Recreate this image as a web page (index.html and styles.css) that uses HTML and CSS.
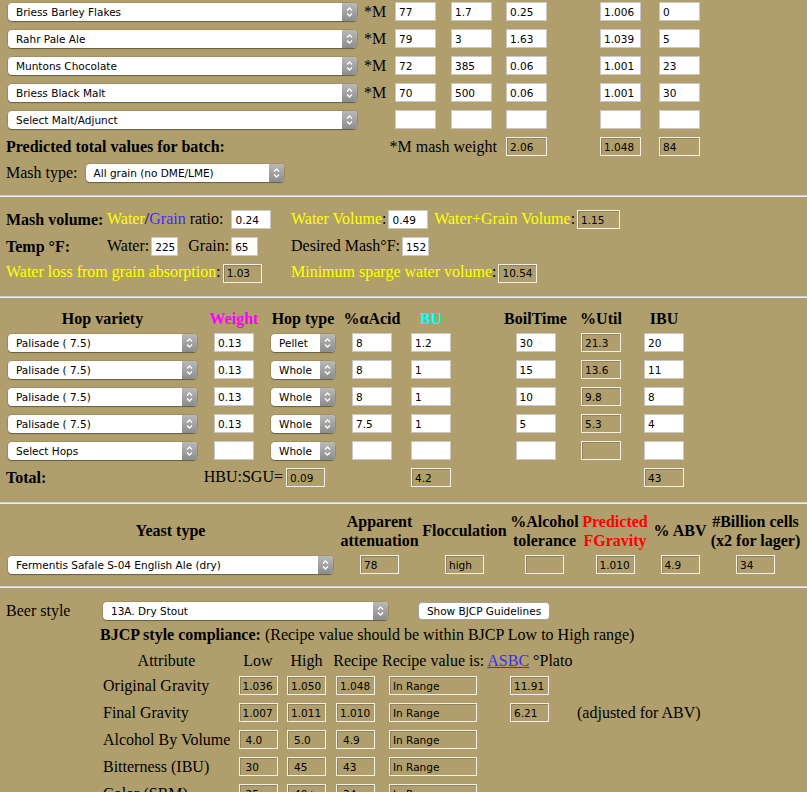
FILE: index.html
```html
<!DOCTYPE html>
<html>
<head>
<meta charset="utf-8">
<title>Recipe</title>
<link rel="stylesheet" href="styles.css">
</head>
<body>
<div class="grain">
  <div class="sel w349"><span class="sel-text">Briess Barley Flakes</span><span class="sel-btn"><svg width="15" height="18" viewBox="0 0 15 18"><path d="M5 7.5L7.5 5 10 7.5M5 10.5L7.5 13 10 10.5" fill="none" stroke="#fff" stroke-width="1.3"/></svg></span></div>
  <span class="m">*M</span>
  <input value="77"><input value="1.7"><input value="0.25"><input value="1.006"><input value="0">

  <div class="sel w349"><span class="sel-text">Rahr Pale Ale</span><span class="sel-btn"><svg width="15" height="18" viewBox="0 0 15 18"><path d="M5 7.5L7.5 5 10 7.5M5 10.5L7.5 13 10 10.5" fill="none" stroke="#fff" stroke-width="1.3"/></svg></span></div>
  <span class="m">*M</span>
  <input value="79"><input value="3"><input value="1.63"><input value="1.039"><input value="5">

  <div class="sel w349"><span class="sel-text">Muntons Chocolate</span><span class="sel-btn"><svg width="15" height="18" viewBox="0 0 15 18"><path d="M5 7.5L7.5 5 10 7.5M5 10.5L7.5 13 10 10.5" fill="none" stroke="#fff" stroke-width="1.3"/></svg></span></div>
  <span class="m">*M</span>
  <input value="72"><input value="385"><input value="0.06"><input value="1.001"><input value="23">

  <div class="sel w349"><span class="sel-text">Briess Black Malt</span><span class="sel-btn"><svg width="15" height="18" viewBox="0 0 15 18"><path d="M5 7.5L7.5 5 10 7.5M5 10.5L7.5 13 10 10.5" fill="none" stroke="#fff" stroke-width="1.3"/></svg></span></div>
  <span class="m">*M</span>
  <input value="70"><input value="500"><input value="0.06"><input value="1.001"><input value="30">

  <div class="sel w349"><span class="sel-text">Select Malt/Adjunct</span><span class="sel-btn"><svg width="15" height="18" viewBox="0 0 15 18"><path d="M5 7.5L7.5 5 10 7.5M5 10.5L7.5 13 10 10.5" fill="none" stroke="#fff" stroke-width="1.3"/></svg></span></div>
  <span class="m"></span>
  <input value=""><input value=""><input value=""><input value=""><input value="">

  <b class="pred t">Predicted total values for batch:</b>
  <span class="mw t">*M mash weight</span>
  <input class="ro" value="2.06" readonly><input class="ro" value="1.048" readonly><input class="ro" value="84" readonly>
</div>

<div class="mashtype">
  <span>Mash type:</span>
  <div class="sel w198"><span class="sel-text">All grain (no DME/LME)</span><span class="sel-btn"><svg width="15" height="18" viewBox="0 0 15 18"><path d="M5 7.5L7.5 5 10 7.5M5 10.5L7.5 13 10 10.5" fill="none" stroke="#fff" stroke-width="1.3"/></svg></span></div>
</div>

<hr class="rule r1">

<div class="mash">
  <b class="t">Mash volume:</b>
  <span><span class="y">Water</span>/<span class="bl">Grain</span> ratio: <input class="w40 gap" value="0.24"></span>
  <span><span class="y">Water Volume</span>:<input class="w40" value="0.49"> <span class="y">Water+Grain Volume</span>:<input class="ro w43" value="1.15" readonly></span>

  <b class="t">Temp °F:</b>
  <span>Water:<input class="w27" value="225"> &nbsp;Grain:<input class="w27" value="65"></span>
  <span>Desired Mash°F:<input class="w27" value="152"></span>

  <span class="span2"><span class="y">Water loss from grain absorption</span>:<input class="ro w39" value="1.03" readonly></span>
  <span><span class="y">Minimum sparge water volume</span>:<input class="ro w39" value="10.54" readonly></span>
</div>

<hr class="rule r2">

<div class="hops">
  <b class="hd">Hop variety</b>
  <b class="hd mag">Weight</b>
  <b class="hd">Hop type</b>
  <b class="hd">%αAcid</b>
  <b class="hd cy">BU</b>
  <span></span>
  <b class="hd">BoilTime</b>
  <b class="hd">%Util</b>
  <b class="hd">IBU</b>

  <div class="sel w189"><span class="sel-text">Palisade ( 7.5)</span><span class="sel-btn"><svg width="15" height="18" viewBox="0 0 15 18"><path d="M5 7.5L7.5 5 10 7.5M5 10.5L7.5 13 10 10.5" fill="none" stroke="#fff" stroke-width="1.3"/></svg></span></div>
  <input class="w40" value="0.13">
  <div class="sel w64"><span class="sel-text">Pellet</span><span class="sel-btn"><svg width="15" height="18" viewBox="0 0 15 18"><path d="M5 7.5L7.5 5 10 7.5M5 10.5L7.5 13 10 10.5" fill="none" stroke="#fff" stroke-width="1.3"/></svg></span></div>
  <input class="w40" value="8"><input class="w40" value="1.2"><span></span><input class="w40" value="30"><input class="ro w40" value="21.3" readonly><input class="w40" value="20">

  <div class="sel w189"><span class="sel-text">Palisade ( 7.5)</span><span class="sel-btn"><svg width="15" height="18" viewBox="0 0 15 18"><path d="M5 7.5L7.5 5 10 7.5M5 10.5L7.5 13 10 10.5" fill="none" stroke="#fff" stroke-width="1.3"/></svg></span></div>
  <input class="w40" value="0.13">
  <div class="sel w64"><span class="sel-text">Whole</span><span class="sel-btn"><svg width="15" height="18" viewBox="0 0 15 18"><path d="M5 7.5L7.5 5 10 7.5M5 10.5L7.5 13 10 10.5" fill="none" stroke="#fff" stroke-width="1.3"/></svg></span></div>
  <input class="w40" value="8"><input class="w40" value="1"><span></span><input class="w40" value="15"><input class="ro w40" value="13.6" readonly><input class="w40" value="11">

  <div class="sel w189"><span class="sel-text">Palisade ( 7.5)</span><span class="sel-btn"><svg width="15" height="18" viewBox="0 0 15 18"><path d="M5 7.5L7.5 5 10 7.5M5 10.5L7.5 13 10 10.5" fill="none" stroke="#fff" stroke-width="1.3"/></svg></span></div>
  <input class="w40" value="0.13">
  <div class="sel w64"><span class="sel-text">Whole</span><span class="sel-btn"><svg width="15" height="18" viewBox="0 0 15 18"><path d="M5 7.5L7.5 5 10 7.5M5 10.5L7.5 13 10 10.5" fill="none" stroke="#fff" stroke-width="1.3"/></svg></span></div>
  <input class="w40" value="8"><input class="w40" value="1"><span></span><input class="w40" value="10"><input class="ro w40" value="9.8" readonly><input class="w40" value="8">

  <div class="sel w189"><span class="sel-text">Palisade ( 7.5)</span><span class="sel-btn"><svg width="15" height="18" viewBox="0 0 15 18"><path d="M5 7.5L7.5 5 10 7.5M5 10.5L7.5 13 10 10.5" fill="none" stroke="#fff" stroke-width="1.3"/></svg></span></div>
  <input class="w40" value="0.13">
  <div class="sel w64"><span class="sel-text">Whole</span><span class="sel-btn"><svg width="15" height="18" viewBox="0 0 15 18"><path d="M5 7.5L7.5 5 10 7.5M5 10.5L7.5 13 10 10.5" fill="none" stroke="#fff" stroke-width="1.3"/></svg></span></div>
  <input class="w40" value="7.5"><input class="w40" value="1"><span></span><input class="w40" value="5"><input class="ro w40" value="5.3" readonly><input class="w40" value="4">

  <div class="sel w189"><span class="sel-text">Select Hops</span><span class="sel-btn"><svg width="15" height="18" viewBox="0 0 15 18"><path d="M5 7.5L7.5 5 10 7.5M5 10.5L7.5 13 10 10.5" fill="none" stroke="#fff" stroke-width="1.3"/></svg></span></div>
  <input class="w40" value="">
  <div class="sel w64"><span class="sel-text">Whole</span><span class="sel-btn"><svg width="15" height="18" viewBox="0 0 15 18"><path d="M5 7.5L7.5 5 10 7.5M5 10.5L7.5 13 10 10.5" fill="none" stroke="#fff" stroke-width="1.3"/></svg></span></div>
  <input class="w40" value=""><input class="w40" value=""><span></span><input class="w40" value=""><input class="ro w40" value="" readonly><input class="w40" value="">

  <b class="left t">Total:</b>
  <span class="hbu">HBU:SGU=<input class="ro w39" value="0.09" readonly></span>
  <input class="ro w40 c5" value="4.2" readonly>
  <input class="ro w40 c9" value="43" readonly>
</div>

<hr class="rule r3">

<div class="yeast">
  <b class="hd yt">Yeast type</b>
  <b class="hd">Apparent<br>attenuation</b>
  <b class="hd">Flocculation</b>
  <b class="hd">%Alcohol<br>tolerance</b>
  <b class="hd red">Predicted<br>FGravity</b>
  <b class="hd">% ABV</b>
  <b class="hd">#Billion cells<br>(x2 for lager)</b>

  <div class="sel w325 ysel"><span class="sel-text">Fermentis Safale S-04 English Ale (dry)</span><span class="sel-btn"><svg width="15" height="18" viewBox="0 0 15 18"><path d="M5 7.5L7.5 5 10 7.5M5 10.5L7.5 13 10 10.5" fill="none" stroke="#fff" stroke-width="1.3"/></svg></span></div>
  <input class="ro w39" value="78" readonly>
  <input class="ro w39" value="high" readonly>
  <input class="ro w39" value="" readonly>
  <input class="ro w39" value="1.010" readonly>
  <input class="ro w39" value="4.9" readonly>
  <input class="ro w39" value="34" readonly>
</div>

<hr class="rule r4">

<div class="style">
  <span class="t">Beer style</span>
  <div class="sel w285"><span class="sel-text">13A. Dry Stout</span><span class="sel-btn"><svg width="15" height="18" viewBox="0 0 15 18"><path d="M5 7.5L7.5 5 10 7.5M5 10.5L7.5 13 10 10.5" fill="none" stroke="#fff" stroke-width="1.3"/></svg></span></div>
  <button class="btn">Show BJCP Guidelines</button>
</div>

<div class="compl"><b>BJCP style compliance:</b>&nbsp;(Recipe value should be within BJCP Low to High range)</div>

<div class="attr">
  <span class="ah">Attribute</span>
  <span class="ah">Low</span>
  <span class="ah">High</span>
  <span class="ah">Recipe</span>
  <span class="rvh ah">Recipe value is: <a href="#" class="link">ASBC</a> °Plato</span>

  <span class="lbl">Original Gravity</span>
  <input class="ro w39" value="1.036" readonly><input class="ro w39" value="1.050" readonly><input class="ro w39" value="1.048" readonly>
  <input class="ro w88" value="In Range" readonly><input class="ro w39" value="11.91" readonly><span></span>

  <span class="lbl">Final Gravity</span>
  <input class="ro w39" value="1.007" readonly><input class="ro w39" value="1.011" readonly><input class="ro w39" value="1.010" readonly>
  <input class="ro w88" value="In Range" readonly><input class="ro w39" value="6.21" readonly><span class="lbl">(adjusted for ABV)</span>

  <span class="lbl">Alcohol By Volume</span>
  <input class="ro w39 sp" value="4.0" readonly><input class="ro w39 sp" value="5.0" readonly><input class="ro w39 sp" value="4.9" readonly>
  <input class="ro w88" value="In Range" readonly><span></span><span></span>

  <span class="lbl">Bitterness (IBU)</span>
  <input class="ro w39 sp" value="30" readonly><input class="ro w39 sp" value="45" readonly><input class="ro w39 sp" value="43" readonly>
  <input class="ro w88" value="In Range" readonly><span></span><span></span>

  <span class="lbl">Color (SRM)</span>
  <input class="ro w39 sp" value="25" readonly><input class="ro w39 sp" value="40+" readonly><input class="ro w39 sp" value="34" readonly>
  <input class="ro w88" value="In Range" readonly><span></span><span></span>
</div>
</body>
</html>
```

FILE: styles.css
```css
* { box-sizing: border-box; }
html { overflow: hidden; }
body {
  margin: 0;
  padding: 0 6px;
  background: #b09f6c;
  color: #000;
  font-family: "Liberation Serif", "Times New Roman", serif;
  font-size: 16px;
  line-height: 1.15;
}

/* controls */
input, .sel, .btn {
  font-family: "DejaVu Sans", "Liberation Sans", sans-serif;
  font-size: 10.5px;
  color: #000;
}
input {
  margin: 0;
  width: 41px;
  height: 19px;
  padding: 0 0 0 3px;
  border: 1px solid #c8c8c8;
  border-radius: 0;
  background: #fff;
  outline: none;
  vertical-align: middle;
}
input.ro {
  background: transparent;
  border: 1px solid #f3f0e6;
  box-shadow: inset 1px 1px 0 #8f8260;
}
input.sp { padding-left: 6px; }
.w27 { width: 27px; }
.w39 { width: 39px; }
.w40 { width: 40px; }
.w43 { width: 43px; }
.w88 { width: 88px; }

.sel {
  display: flex;
  height: 18px;
  background: #fff;
  border-radius: 4px;
  overflow: hidden;
  box-shadow: 0 1px 1px rgba(0, 0, 0, 0.35), 0 0 0 0.5px rgba(0, 0, 0, 0.18);
}
.sel-text {
  flex: 1;
  padding-left: 8px;
  line-height: 18px;
  white-space: nowrap;
  overflow: hidden;
}
.sel-btn {
  width: 15px;
  display: flex;
  background: linear-gradient(#b9b9b9, #8c8c8c);
}
.w349 { width: 349px; margin-left: 2px; }
.w198 { width: 198px; }
.w189 { width: 189px; }
.w64 { width: 64px; }
.w325 { width: 325px; }
.w285 { width: 285px; }

.btn {
  margin: 0 0 0 30px;
  height: 18px;
  width: 132px;
  padding: 0;
  background: #fff;
  border: 1px solid #a3a3a3;
  border-radius: 4px;
  line-height: 16px;
  justify-self: start;
}

.rule {
  border: 0;
  height: 2px;
  margin: 0 -6px;
  background: linear-gradient(#cfcfdc 50%, #ececf4 50%);
}
.r1 { margin-top: 9px; margin-bottom: 9px; }
.r2 { margin-top: 10px; margin-bottom: 7px; }
.r3 { margin-top: 11px; margin-bottom: 7px; }
.r4 { margin-top: 7px; margin-bottom: 9px; }

.y { color: #ffff00; }
.bl { color: #3b2cff; }
.mag { color: #ff00ff; }
.cy { color: #00ffff; }
.red { color: #ff0000; }

/* nudges serif labels down to sit on the control baseline */
.t { padding-top: 2px; }

/* grain section */
.grain {
  display: grid;
  grid-template-columns: 358px 31px 56px 55px 94px 59px 41px;
  grid-auto-rows: 27px;
  align-items: center;
  justify-items: start;
  margin-top: -2px;
}
.m { padding-top: 1px; }
.pred { white-space: nowrap; }
.mw { grid-column: 2 / 5; justify-self: end; margin-right: 9px; white-space: nowrap; }

.mashtype {
  display: flex;
  align-items: center;
  height: 26px;
}
.mashtype .sel { margin-left: 8px; }

/* mash section */
.mash {
  display: grid;
  grid-template-columns: 101px 184px 1fr;
  grid-template-rows: 27px 27px 26px;
  align-items: center;
  white-space: nowrap;
}
.mash input { margin: 0 2px; }
.mash input.gap { margin-left: 4px; }
.span2 { grid-column: 1 / 3; }

/* hops */
.hops {
  display: grid;
  grid-template-columns: 193px 70px 68px 70px 48px 45px 71px 60px 66px;
  grid-template-rows: 24px repeat(6, 27px);
  align-items: center;
  justify-items: center;
}
.hd { white-space: nowrap; }
.hops .hd { padding-top: 4px; }
.left { justify-self: start; }
.hbu { grid-column: 2 / 4; justify-self: end; margin-right: 12px; white-space: nowrap; }
.hbu input { margin-left: 3px; }
.c5 { grid-column: 5; }
.c9 { grid-column: 9; }

/* yeast */
.yeast {
  display: grid;
  grid-template-columns: 333px 81px 89px 71px 70px 60px 91px;
  grid-template-rows: 39px 29px;
  align-items: center;
  justify-items: center;
}
.yeast .hd { text-align: center; line-height: 19px; }
.yeast .yt { justify-self: stretch; padding: 0 6px 0 2px; }
.ysel { justify-self: start; margin-left: 2px; }

/* style */
.style {
  display: grid;
  grid-template-columns: 97px 285px auto;
  height: 27px;
  align-items: center;
}
.compl {
  display: flex;
  align-items: center;
  height: 22px;
  padding-left: 94px;
  white-space: nowrap;
}
.attr {
  display: grid;
  margin-left: 93px;
  grid-template-columns: 135px 48px 49px 49px 106px 87px auto;
  grid-template-rows: 26px repeat(5, 27px);
  align-items: center;
  justify-items: center;
  white-space: nowrap;
}
.ah { padding-top: 4px; }
.lbl { justify-self: start; padding-left: 4px; padding-top: 2px; }
.rvh { grid-column: 5 / 8; justify-self: start; padding-left: 2px; }
.link { color: #3b2cff; text-decoration: underline; }
```
